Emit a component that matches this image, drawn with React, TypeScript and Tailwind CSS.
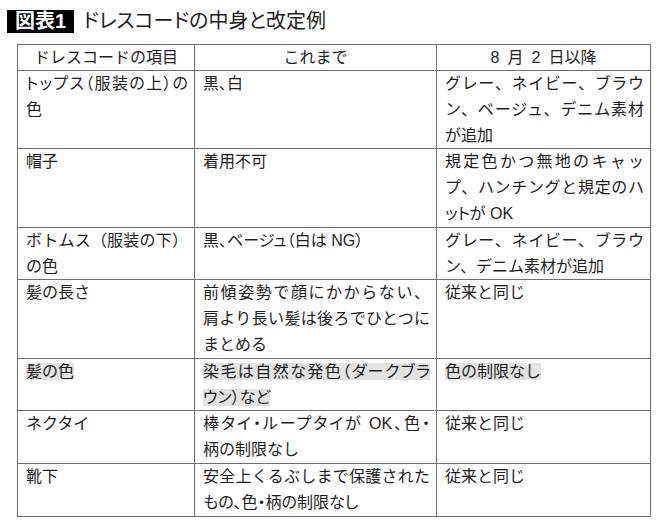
import React from "react";

type Line = { t: string; j?: boolean; hl?: boolean; p?: boolean };
type Row = { c1: Line[]; c2: Line[]; c3: Line[] };

const rows: Row[] = [
  {
    c1: [{ t: "トップス（服装の上）の", j: true, p: true }, { t: "色" }],
    c2: [{ t: "黒、白", p: true }],
    c3: [
      { t: "グレー、ネイビー、ブラウ", j: true },
      { t: "ン、ベージュ、デニム素材", j: true },
      { t: "が追加" },
    ],
  },
  {
    c1: [{ t: "帽子" }],
    c2: [{ t: "着用不可" }],
    c3: [
      { t: "規定色かつ無地のキャッ", j: true },
      { t: "プ、ハンチングと規定のハ", j: true },
      { t: "ットが OK", p: true },
    ],
  },
  {
    c1: [{ t: "ボトムス（服装の下）", j: true }, { t: "の色" }],
    c2: [{ t: "黒、ベージュ（白は NG）", p: true }],
    c3: [
      { t: "グレー、ネイビー、ブラウ", j: true },
      { t: "ン、デニム素材が追加" },
    ],
  },
  {
    c1: [{ t: "髪の長さ" }],
    c2: [
      { t: "前傾姿勢で顔にかからない、", j: true },
      { t: "肩より長い髪は後ろでひとつに", j: true },
      { t: "まとめる" },
    ],
    c3: [{ t: "従来と同じ" }],
  },
  {
    c1: [{ t: "髪の色", hl: true }],
    c2: [
      { t: "染毛は自然な発色（ダークブラ", j: true, hl: true, p: true },
      { t: "ウン）など", hl: true, p: true },
    ],
    c3: [{ t: "色の制限なし", hl: true }],
  },
  {
    c1: [{ t: "ネクタイ" }],
    c2: [
      { t: "棒タイ・ループタイが OK、色・", j: true, p: true },
      { t: "柄の制限なし" },
    ],
    c3: [{ t: "従来と同じ" }],
  },
  {
    c1: [{ t: "靴下" }],
    c2: [
      { t: "安全上くるぶしまで保護された", j: true },
      { t: "もの、色・柄の制限なし", p: true },
    ],
    c3: [{ t: "従来と同じ" }],
  },
];

const Cell = ({ lines }: { lines: Line[] }) => (
  <td className="border border-[#6f6f6f] pl-[8px] pr-[6px] align-top">
    {lines.map((l, i) => (
      <div
        key={i}
        className={
          (l.j ? "text-justify [text-align-last:justify] " : "") +
          (l.p ? "[font-feature-settings:'palt'] " : "")
        }
      >
        {l.hl ? <span className="bg-[#e3e3e3]">{l.t}</span> : l.t}
      </div>
    ))}
  </td>
);

export default function App() {
  return (
    <div className="w-[670px] h-[525px] bg-white text-[#1e1e1e] font-['Liberation_Sans','Noto_Sans_CJK_JP',sans-serif]">
      <div className="flex items-center pt-[10px] pl-[7px]">
        <div className="bg-black text-white font-bold text-[20px] leading-[23px] h-[23px] px-[8px]">
          図表1
        </div>
        <div className="ml-[9px] text-[20px] leading-[23px] [font-feature-settings:'palt']">
          ドレスコードの中身と改定例
        </div>
      </div>
      <table className="ml-[17px] mt-[11px] border-collapse border border-[#6f6f6f] text-[16px] leading-[25.8px] table-fixed w-[633px]">
        <colgroup>
          <col className="w-[177px]" />
          <col className="w-[242px]" />
          <col className="w-[214px]" />
        </colgroup>
        <thead>
          <tr>
            <th className="border border-[#6f6f6f] font-normal text-center leading-[25px]">ドレスコードの項目</th>
            <th className="border border-[#6f6f6f] font-normal text-center leading-[25px]">これまで</th>
            <th className="border border-[#6f6f6f] font-normal text-center leading-[25px] whitespace-pre">
              {"8\u2002月\u20022\u2002日以降"}
            </th>
          </tr>
        </thead>
        <tbody>
          {rows.map((r, i) => (
            <tr key={i}>
              <Cell lines={r.c1} />
              <Cell lines={r.c2} />
              <Cell lines={r.c3} />
            </tr>
          ))}
        </tbody>
      </table>
    </div>
  );
}
